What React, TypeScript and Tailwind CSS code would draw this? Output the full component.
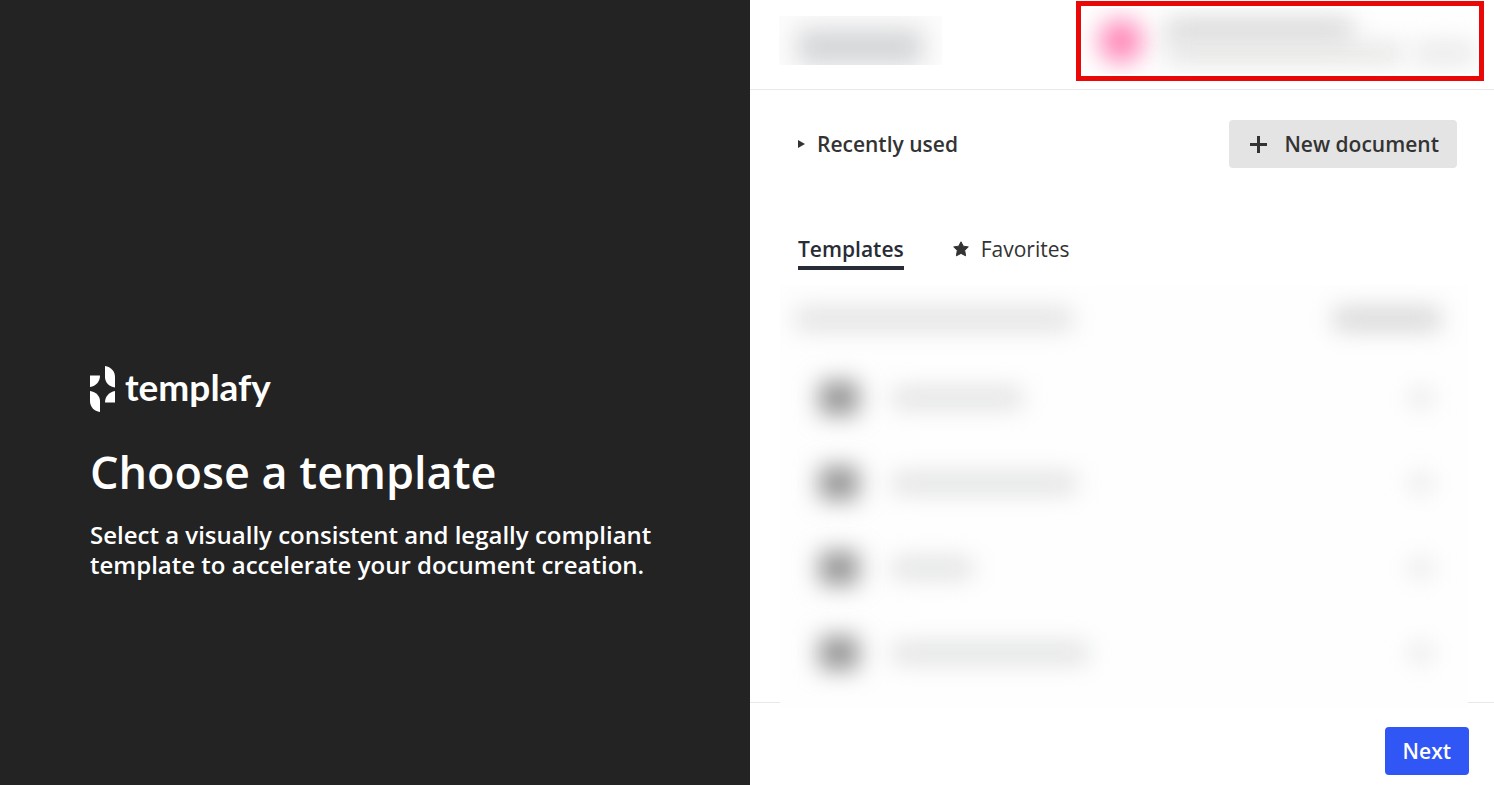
import React from 'react';

interface TemplateRow {
  id: number;
  width: string;
}

const templateRows: TemplateRow[] = [
  { id: 1, width: 'w-[130px]' },
  { id: 2, width: 'w-[184px]' },
  { id: 3, width: 'w-[80px]' },
  { id: 4, width: 'w-[196px]' },
];

const LogoMark: React.FC = () => (
  <svg className="h-[46px] w-[25px]" viewBox="0 0 25 46" fill="#fff" aria-hidden="true">
    <path d="M15 0C21 1 25 5.500 25 11V21.500C19 20.500 15 16.500 15 11Z" />
    <path d="M0 9.500H10C10 15.500 6 20 0 21Z" />
    <path d="M0 25C6 26 10 30 10 35V46C4 45 0 41 0 35Z" />
    <path d="M25 25V36.500H15C15 30.500 19 26 25 25Z" />
  </svg>
);

const StarIcon: React.FC = () => (
  <svg className="size-4" viewBox="0 0 16 16" fill="#333" stroke="#333" strokeWidth="1" strokeLinejoin="round" aria-hidden="true">
    <path d="M8 .8L10.300 5.200L15.300 5.900L11.700 9.400L12.600 14.800L8 12.400L3.400 14.800L4.300 9.400L.7 5.900L5.700 5.200Z" />
  </svg>
);

const IntroPanel: React.FC = () => (
  <section className="flex w-[50.2%] shrink-0 flex-col justify-center bg-[#232323] px-[90px] pt-40 text-white">
    <div className="flex items-start gap-2.5">
      <LogoMark />
      <span className="font-['Lato',sans-serif] text-[37px] leading-[42px] font-bold">templafy</span>
    </div>
    <h1 className="mt-[30px] text-[45px] leading-[60px] font-semibold">Choose a template</h1>
    <p className="mt-[18px] max-w-[580px] text-[24px] leading-[30px] font-semibold">
      Select a visually consistent and legally compliant template to accelerate your document creation.
    </p>
  </section>
);

const Header: React.FC = () => (
  <header className="flex h-[90px] shrink-0 items-start justify-between border-b border-[#e8e8e8] pt-px pr-2.5 pl-[29px]">
    <div className="mt-[15px] flex h-[49px] w-[163px] items-end justify-center overflow-hidden bg-[#fcfcfc]" aria-hidden="true">
      <div className="h-9 w-[124px] bg-[#d4d5d7] blur-[12px]" />
    </div>
    <div className="h-20 w-[408px] border-[5px] border-[#ea0707] p-0.5">
      <div className="flex h-full items-center gap-6 overflow-hidden bg-[#fefefe] pl-4" aria-hidden="true">
        <div className="size-11 shrink-0 rounded-full bg-[#ff87b8] blur-[12px]" />
        <div className="flex flex-col">
          <div className="h-6 w-[185px] bg-[#d6d7d6] blur-[12px]" />
          <div className="flex gap-3">
            <div className="h-5 w-[235px] bg-[#e4e4e3] blur-[12px]" />
            <div className="h-5 w-[60px] bg-[#e6e6e6] blur-[12px]" />
          </div>
        </div>
      </div>
    </div>
  </header>
);

const TemplateList: React.FC = () => (
  <div className="relative mt-[15px] -mb-1.5 ml-[30px] mr-[26px] h-[423px] overflow-hidden bg-[#fefefe] px-4 pt-6" aria-hidden="true">
    <div className="flex h-5 justify-between pr-3">
      <div className="w-[276px] bg-[#dedede] blur-[12px]" />
      <div className="w-[106px] bg-[#d0d1d1] blur-[12px]" />
    </div>
    <ul className="pt-[26px]">
      {templateRows.map(row => (
        <li key={row.id} className="flex h-[85px] items-center pr-5 pl-6">
          <div className="h-8 w-[38px] bg-[#8c8c8c] blur-[12px]" />
          <div className={`ml-[34px] h-[18px] bg-[#dcdddd] blur-[12px] ${row.width}`} />
          <div className="ml-auto h-5 w-[22px] bg-[#eaebeb] blur-[11px]" />
        </li>
      ))}
    </ul>
  </div>
);

export default function App() {
  return (
    <div className="flex min-h-screen bg-white font-['Open_Sans',sans-serif] text-[#333]">
      <IntroPanel />
      <div className="flex min-w-0 flex-1 flex-col">
        <Header />
        <main className="flex-1">
          <div className="flex items-center justify-between pt-[30px] pr-[37px] pl-12">
            <button type="button" className="flex items-center gap-3 text-[21px] leading-7 font-semibold">
              <svg className="h-2 w-[7px]" viewBox="0 0 7 8" fill="#333" aria-hidden="true">
                <path d="M0 0L7 4L0 8Z" />
              </svg>
              Recently used
            </button>
            <button type="button" className="flex h-12 items-center gap-[17px] rounded bg-[#e4e4e4] pr-[18px] pl-[21px] text-[21px] leading-7 font-semibold">
              <svg className="size-[17px]" viewBox="0 0 17 17" stroke="#333" strokeWidth="3" aria-hidden="true">
                <path d="M8.500 0V17M0 8.500H17" />
              </svg>
              New document
            </button>
          </div>
          <div className="mt-[67px] flex items-start gap-[49px] pl-12 text-[21px] leading-7" role="tablist">
            <button type="button" role="tab" aria-selected="true" className="border-b-4 border-[#282c37] pb-[3px] font-semibold text-[#282c37]">
              Templates
            </button>
            <button type="button" role="tab" aria-selected="false" className="flex items-center gap-3">
              <StarIcon />
              Favorites
            </button>
          </div>
          <TemplateList />
        </main>
        <footer className="flex h-[83px] shrink-0 justify-end border-t border-[#e8e8e8] pt-6 pr-[25px]">
          <button type="button" className="h-12 rounded bg-[#3156f6] px-[18px] text-[21px] leading-7 font-semibold text-white">
            Next
          </button>
        </footer>
      </div>
    </div>
  );
}
